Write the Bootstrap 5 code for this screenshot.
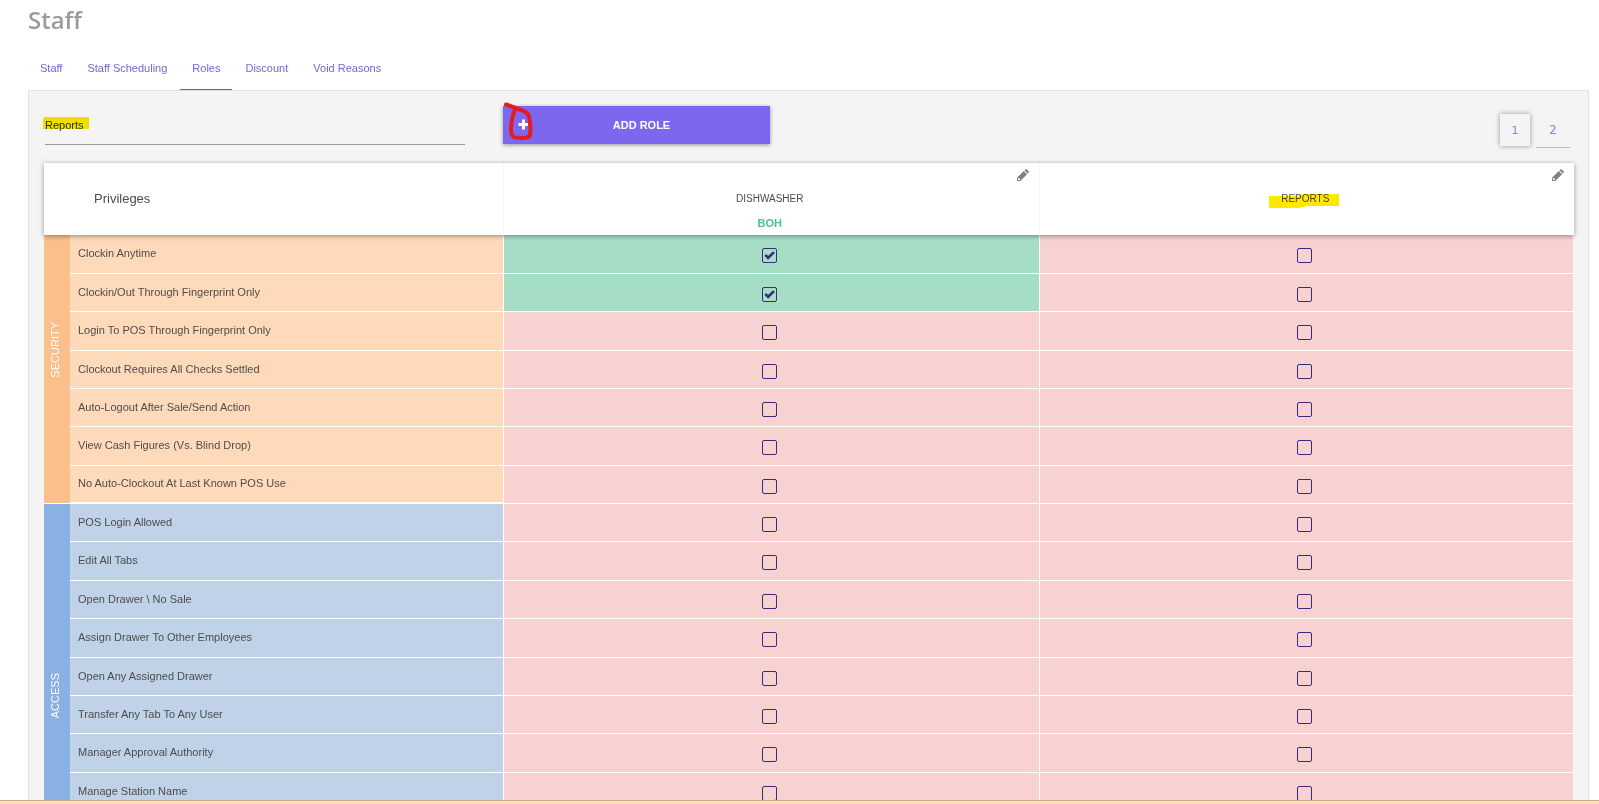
<!DOCTYPE html>
<html lang="en">
<head>
<meta charset="utf-8">
<meta name="viewport" content="width=device-width, initial-scale=1">
<title>Staff – Roles</title>
<link href="https://cdn.jsdelivr.net/npm/bootstrap@5.3.0/dist/css/bootstrap.min.css" rel="stylesheet">
<style>
  body { font-family: "Liberation Sans", Arial, sans-serif; font-size: 11px; line-height: 16px; color: #4d4d4d; background: #fff; }
  .page-title { font: 600 24px/32px "Open Sans", "Noto Sans", sans-serif; color: #9b9b9b; padding-top: 4px; margin-bottom: 24px; }
  .tabs { gap: 1px; }
  .tabs .nav-link { padding: 0 12px 13px; color: #7466d3; border-bottom: 1px solid transparent; }
  .tabs .nav-link.active { border-bottom-color: #6a55cb; }
  .page-main { padding: 0 10px 0 28px; }
  .panel { background: #f4f4f4; border: 1px solid #e1e1e1; border-bottom: 0; padding: 15px 14px 0 15px; }
  .toolbar { height: 57px; }
  .w-role-label { width: 30%; }
  .filter { width: 420px; max-width: 92%; height: 39px; padding: 0; border: 0; border-bottom: 1px solid #999; border-radius: 0; background: transparent; font-size: 11px; color: #333; margin-left: 1px; }
  .filter:focus { background: transparent; box-shadow: none; }
  .hl { position: absolute; overflow: visible; mix-blend-mode: multiply; pointer-events: none; }
  .hl-filter { left: -1px; top: 11px; }
  .hl-role { left: -12px; top: 1px; }
  .btn-add { width: 267px; height: 38px; border: 0; border-radius: 0; background: #7e67ef; color: #fff; font-size: 11px; font-weight: 700; padding: 0 0 0 10px; box-shadow: 0 1px 4px rgba(0,0,0,.4); }
  .btn-add:hover { background: #6f57e6; color: #fff; }
  .btn-add .plus { position: absolute; left: 15px; top: 13px; }
  .scribble { position: absolute; left: 0; top: -4px; overflow: visible; pointer-events: none; }
  .pager { gap: 6px; padding: 8px 4px 0 0; }
  .pager a { font: 12px/33px "DejaVu Sans", sans-serif; color: #8b7fda; text-align: center; text-decoration: none; width: 34px; height: 34px; border-bottom: 1px solid #bbb; }
  .pager a.current { font-size: 11px; width: 30px; height: 32px; border: 0; box-shadow: 0 0 5px rgba(0,0,0,.4); }
  .roles { table-layout: fixed; width: 100%; border-collapse: separate; border-spacing: 0; }
  .roles .c-side { width: 26px; }
  .roles .c-role { width: 35%; }
  .roles thead { position: relative; z-index: 1; box-shadow: 0 1px 5px rgba(0,0,0,.4); }
  .roles thead th { height: 72px; background: #fff; font-weight: 400; padding: 0; position: relative; }
  .roles thead th + th { border-left: 1px solid #f5f5f5; text-align: center; }
  .roles thead .title { font-size: 13px; padding-left: 50px; }
  .roles .role-name { font-size: 10px; line-height: 16px; }
  .roles .role-dept { color: #4fc28b; font-weight: 700; line-height: 16px; min-height: 16px; margin-top: 8px; }
  .roles thead .role { vertical-align: top; padding: 28px 3px 0 0; }
  .edit { position: absolute; right: 10px; top: 6px; line-height: 0; color: #808080; }
  .roles tbody tr { height: 38px; }
  .roles tbody tr.tall { height: 39px; }
  .roles tbody tr.rest { height: 115px; }
  .roles tbody .name { font-weight: 400; padding: 0 8px 2px; border-bottom: 1px solid #fff; }
  .roles .security tr:last-child .name { border-bottom-width: 2px; }
  .roles tbody td { padding: 3px 3px 0 0; text-align: center; background: #f8d2d1; border-left: 1px solid #fff; border-bottom: 1px solid #fff; }
  .roles tbody td.on { background: #a6dec5; }
  .roles tbody tr > :last-child { border-right: 1px solid #f4f4f4; }
  .roles .group { color: #fff; font-weight: 400; padding: 0; border-bottom: 1px solid #fff; }
  .roles .group span { writing-mode: vertical-rl; transform: rotate(180deg); font-size: 11px; line-height: 22px; padding-top: 38px; padding-left: 4px; display: block; margin: 0 auto; text-align: center; width: 26px; }
  .security .group { background: #fbbf8b; }
  .security .name { background: #ffdaba; }
  .access .group { background: #89b1e3; }
  .access .name { background: #bfd2e7; }
  .roles .form-check-input { display: block; width: 15px; height: 15px; margin: 0 auto; border: 1px solid #3a2b82; border-radius: 2px; background-color: transparent; }
  .roles .form-check-input:checked { background-color: transparent; background-size: 13px 13px; background-image: url("data:image/svg+xml,%3csvg xmlns='http://www.w3.org/2000/svg' viewBox='0 0 13 13'%3e%3cpath fill='none' stroke='%233a2b82' stroke-width='2.6' d='M2.300 5.900l2.800 2.900L11 3.100'/%3e%3c/svg%3e"); }
  .footer-strip { height: 4px; background: #ffdfb8; border-top: 1px solid #c9b08d; }
</style>
</head>
<body class="vh-100 overflow-hidden d-flex flex-column">
<main class="page-main flex-grow-1 overflow-hidden">
  <h1 class="page-title">Staff</h1>
  <nav class="nav tabs" aria-label="Staff sections">
    <a class="nav-link" href="#staff">Staff</a>
    <a class="nav-link" href="#scheduling">Staff Scheduling</a>
    <a class="nav-link active" aria-current="page" href="#roles">Roles</a>
    <a class="nav-link" href="#discount">Discount</a>
    <a class="nav-link" href="#void">Void Reasons</a>
  </nav>
  <section class="panel">
    <div class="toolbar d-flex align-items-start">
      <div class="w-role-label position-relative flex-shrink-0">
        <input class="form-control filter" type="text" value="Reports" aria-label="Filter roles">
        <svg class="hl hl-filter" width="46" height="13" aria-hidden="true"><path d="M1 0H46V12H0V2Z" fill="#fae900"/></svg>
      </div>
      <button type="button" class="btn btn-add position-relative">
        <svg class="plus" width="11" height="11" viewBox="0 0 11 11" aria-hidden="true"><path d="M4 .5h3V4h3.500v3H7v3.500H4V7H.5V4H4z" fill="#fff"/></svg>
        ADD ROLE
        <svg class="scribble" width="32" height="40" viewBox="0 0 32 40" fill="none" stroke="#e61c1c" stroke-width="4" stroke-linecap="round" stroke-linejoin="round" aria-hidden="true"><path d="M3 2.500L18 8Q26 10 26.500 17Q28 27 27 33Q26 36 19 36L12 35.500Q8 34 8 28Q8 16 12 8"/></svg>
      </button>
      <nav class="pager d-flex ms-auto" aria-label="Role pages">
        <a class="current" aria-current="page" href="#page1">1</a>
        <a href="#page2">2</a>
      </nav>
    </div>
    <table class="roles">
      <colgroup><col class="c-side"><col><col class="c-role"><col class="c-role"></colgroup>
      <thead>
        <tr>
          <th colspan="2" scope="col" class="title">Privileges</th>
          <th scope="col" class="role">
            <div class="role-name">DISHWASHER</div>
            <div class="role-dept">BOH</div>
            <a class="edit" href="#edit-dishwasher" aria-label="Edit Dishwasher"><svg width="12" height="12" viewBox="0 0 12 12"><path fill="currentColor" fill-rule="evenodd" d="M0 12V8.700L6.800 1.900 10.100 5.200 3.300 12ZM1 9.200V11H2.800L3.300 10.400 1.600 8.700ZM7.400 1.300L8.300.4Q9 -.2 9.700.4L11.600 2.300Q12.200 3 11.600 3.700L10.700 4.600Z"/></svg></a>
          </th>
          <th scope="col" class="role">
            <div class="role-name"><span class="position-relative">REPORTS<svg class="hl hl-role" width="70" height="14" aria-hidden="true"><path d="M0 2H28L34 0H70V12H38L29 14H0Z" fill="#ffe800"/></svg></span></div>
            <a class="edit" href="#edit-reports" aria-label="Edit Reports"><svg width="12" height="12" viewBox="0 0 12 12"><path fill="currentColor" fill-rule="evenodd" d="M0 12V8.700L6.800 1.900 10.100 5.200 3.300 12ZM1 9.200V11H2.800L3.300 10.400 1.600 8.700ZM7.400 1.300L8.300.4Q9 -.2 9.700.4L11.600 2.300Q12.200 3 11.600 3.700L10.700 4.600Z"/></svg></a>
          </th>
        </tr>
      </thead>
      <tbody class="security">
        <tr class="tall"><th class="group" scope="rowgroup" rowspan="7"><span>SECURITY</span></th>
          <th class="name" scope="row">Clockin Anytime</th>
          <td class="on"><input class="form-check-input" type="checkbox" checked aria-label="Dishwasher: Clockin Anytime"></td>
          <td><input class="form-check-input" type="checkbox" aria-label="Reports: Clockin Anytime"></td></tr>
        <tr><th class="name" scope="row">Clockin/Out Through Fingerprint Only</th>
          <td class="on"><input class="form-check-input" type="checkbox" checked aria-label="Dishwasher: Clockin/Out Through Fingerprint Only"></td>
          <td><input class="form-check-input" type="checkbox" aria-label="Reports: Clockin/Out Through Fingerprint Only"></td></tr>
        <tr class="tall"><th class="name" scope="row">Login To POS Through Fingerprint Only</th>
          <td><input class="form-check-input" type="checkbox" aria-label="Dishwasher: Login To POS Through Fingerprint Only"></td>
          <td><input class="form-check-input" type="checkbox" aria-label="Reports: Login To POS Through Fingerprint Only"></td></tr>
        <tr><th class="name" scope="row">Clockout Requires All Checks Settled</th>
          <td><input class="form-check-input" type="checkbox" aria-label="Dishwasher: Clockout Requires All Checks Settled"></td>
          <td><input class="form-check-input" type="checkbox" aria-label="Reports: Clockout Requires All Checks Settled"></td></tr>
        <tr><th class="name" scope="row">Auto-Logout After Sale/Send Action</th>
          <td><input class="form-check-input" type="checkbox" aria-label="Dishwasher: Auto-Logout After Sale/Send Action"></td>
          <td><input class="form-check-input" type="checkbox" aria-label="Reports: Auto-Logout After Sale/Send Action"></td></tr>
        <tr class="tall"><th class="name" scope="row">View Cash Figures (Vs. Blind Drop)</th>
          <td><input class="form-check-input" type="checkbox" aria-label="Dishwasher: View Cash Figures (Vs. Blind Drop)"></td>
          <td><input class="form-check-input" type="checkbox" aria-label="Reports: View Cash Figures (Vs. Blind Drop)"></td></tr>
        <tr><th class="name" scope="row">No Auto-Clockout At Last Known POS Use</th>
          <td><input class="form-check-input" type="checkbox" aria-label="Dishwasher: No Auto-Clockout At Last Known POS Use"></td>
          <td><input class="form-check-input" type="checkbox" aria-label="Reports: No Auto-Clockout At Last Known POS Use"></td></tr>
      </tbody>
      <tbody class="access">
        <tr><th class="group" scope="rowgroup" rowspan="9"><span>ACCESS</span></th>
          <th class="name" scope="row">POS Login Allowed</th>
          <td><input class="form-check-input" type="checkbox" aria-label="Dishwasher: POS Login Allowed"></td>
          <td><input class="form-check-input" type="checkbox" aria-label="Reports: POS Login Allowed"></td></tr>
        <tr class="tall"><th class="name" scope="row">Edit All Tabs</th>
          <td><input class="form-check-input" type="checkbox" aria-label="Dishwasher: Edit All Tabs"></td>
          <td><input class="form-check-input" type="checkbox" aria-label="Reports: Edit All Tabs"></td></tr>
        <tr><th class="name" scope="row">Open Drawer \ No Sale</th>
          <td><input class="form-check-input" type="checkbox" aria-label="Dishwasher: Open Drawer \ No Sale"></td>
          <td><input class="form-check-input" type="checkbox" aria-label="Reports: Open Drawer \ No Sale"></td></tr>
        <tr class="tall"><th class="name" scope="row">Assign Drawer To Other Employees</th>
          <td><input class="form-check-input" type="checkbox" aria-label="Dishwasher: Assign Drawer To Other Employees"></td>
          <td><input class="form-check-input" type="checkbox" aria-label="Reports: Assign Drawer To Other Employees"></td></tr>
        <tr><th class="name" scope="row">Open Any Assigned Drawer</th>
          <td><input class="form-check-input" type="checkbox" aria-label="Dishwasher: Open Any Assigned Drawer"></td>
          <td><input class="form-check-input" type="checkbox" aria-label="Reports: Open Any Assigned Drawer"></td></tr>
        <tr><th class="name" scope="row">Transfer Any Tab To Any User</th>
          <td><input class="form-check-input" type="checkbox" aria-label="Dishwasher: Transfer Any Tab To Any User"></td>
          <td><input class="form-check-input" type="checkbox" aria-label="Reports: Transfer Any Tab To Any User"></td></tr>
        <tr class="tall"><th class="name" scope="row">Manager Approval Authority</th>
          <td><input class="form-check-input" type="checkbox" aria-label="Dishwasher: Manager Approval Authority"></td>
          <td><input class="form-check-input" type="checkbox" aria-label="Reports: Manager Approval Authority"></td></tr>
        <tr><th class="name" scope="row">Manage Station Name</th>
          <td><input class="form-check-input" type="checkbox" aria-label="Dishwasher: Manage Station Name"></td>
          <td><input class="form-check-input" type="checkbox" aria-label="Reports: Manage Station Name"></td></tr>
        <tr class="rest"><td class="name"></td><td></td><td></td></tr>
      </tbody>
    </table>
  </section>
</main>
<div class="footer-strip flex-shrink-0"></div>
<script src="https://cdn.jsdelivr.net/npm/bootstrap@5.3.0/dist/js/bootstrap.bundle.min.js"></script>
</body>
</html>
